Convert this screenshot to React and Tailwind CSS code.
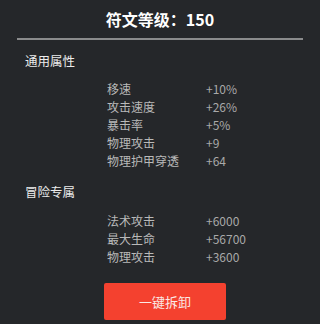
import React from 'react';

const general = [
  ['移速', '+10%'],
  ['攻击速度', '+26%'],
  ['暴击率', '+5%'],
  ['物理攻击', '+9'],
  ['物理护甲穿透', '+64'],
];

const adventure = [
  ['法术攻击', '+6000'],
  ['最大生命', '+56700'],
  ['物理攻击', '+3600'],
];

const font = { fontFamily: '"Noto Sans CJK SC", "Noto Sans", sans-serif' };

const StatRows = ({ rows }) => (
  <div className="flex flex-col">
    {rows.map(([label, value], i) => (
      <div key={i} className="flex h-[18px] items-center text-[12px] leading-[18px]">
        <span className="w-[99px] pl-[107px] box-content text-[#b9b9b9] whitespace-nowrap">{label}</span>
        <span className="text-[#a9a9a9]">{value}</span>
      </div>
    ))}
  </div>
);

const App = () => {
  return (
    <div className="w-[320px] h-[324px] bg-[#25272a] overflow-hidden" style={font}>
      <div className="h-[38px] flex items-center justify-center text-white text-[16px] font-bold">
        符文等级：150
      </div>
      <div className="mx-[17px] h-[2px] bg-[#8a8b8c]" />

      <div className="mt-[13px] pl-[25px] h-[16px] leading-[16px] text-[12.5px] text-[#ececec]">通用属性</div>
      <div className="mt-[11px]">
        <StatRows rows={general} />
      </div>

      <div className="mt-[14px] pl-[25px] h-[16px] leading-[16px] text-[12.5px] text-[#ececec]">冒险专属</div>
      <div className="mt-[12px]">
        <StatRows rows={adventure} />
      </div>

      <div className="mt-[17px] pl-[104px]">
        <button className="w-[122px] h-[37px] bg-[#f4412f] rounded-[2px] text-[#fbe9e6] text-[13px] flex items-center justify-center">
          一键拆卸
        </button>
      </div>
    </div>
  );
};

export default App;
